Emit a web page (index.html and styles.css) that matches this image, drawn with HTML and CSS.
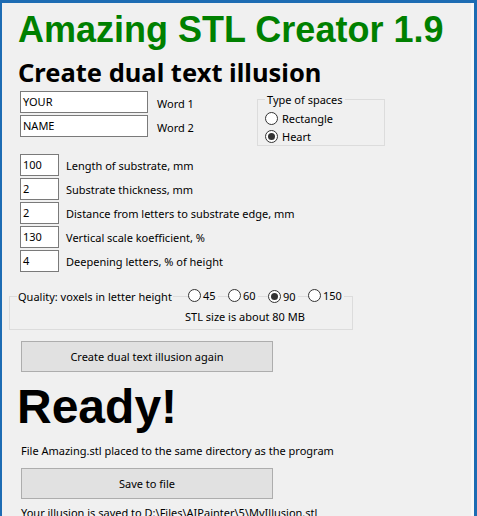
FILE: index.html
```html
<!DOCTYPE html>
<html>
<head>
<meta charset="utf-8">
<link rel="stylesheet" href="styles.css">
</head>
<body>
<div class="window">
  <h1 class="title">Amazing STL Creator 1.9</h1>
  <h2 class="subtitle">Create dual text illusion</h2>

  <div class="words-row">
    <div class="words">
      <div class="field-row"><div class="tb tb-word">YOUR</div><span class="word-label">Word 1</span></div>
      <div class="field-row"><div class="tb tb-word">NAME</div><span class="word-label">Word 2</span></div>
    </div>
    <div class="group spaces">
      <div class="group-head"><span class="legend">Type of spaces</span></div>
      <div class="radio-row first"><span class="radio"></span><span class="radio-text">Rectangle</span></div>
      <div class="radio-row"><span class="radio checked"></span><span class="radio-text">Heart</span></div>
    </div>
  </div>

  <div class="params">
    <div class="field-row"><div class="tb tb-num">100</div><span class="param-label">Length of substrate, mm</span></div>
    <div class="field-row"><div class="tb tb-num">2</div><span class="param-label">Substrate thickness, mm</span></div>
    <div class="field-row"><div class="tb tb-num">2</div><span class="param-label">Distance from letters to substrate edge, mm</span></div>
    <div class="field-row"><div class="tb tb-num">130</div><span class="param-label">Vertical scale koefficient, %</span></div>
    <div class="field-row"><div class="tb tb-num">4</div><span class="param-label">Deepening letters, % of height</span></div>
  </div>

  <div class="group quality">
    <div class="group-head">
      <div class="q-legend"><span class="legend">Quality: voxels in letter height</span></div>
      <div class="q-opt"><span class="q-inner"><span class="radio"></span><span class="q-text">45</span></span></div>
      <div class="q-opt"><span class="q-inner"><span class="radio"></span><span class="q-text">60</span></span></div>
      <div class="q-opt"><span class="q-inner"><span class="radio checked"></span><span class="q-text">90</span></span></div>
      <div class="q-opt"><span class="q-inner"><span class="radio"></span><span class="q-text">150</span></span></div>
    </div>
    <div class="stl-size">STL size is about 80 MB</div>
  </div>

  <div class="button btn-create">Create dual text illusion again</div>

  <div class="ready">Ready!</div>

  <div class="info">File Amazing.stl placed to the same directory as the program</div>

  <div class="button btn-save">Save to file</div>

  <div class="info saved">Your illusion is saved to D:\Files\AIPainter\5\MyIllusion.stl</div>
</div>
</body>
</html>
```

FILE: styles.css
```css
html, body {
  margin: 0;
  padding: 0;
}

body {
  width: 477px;
  height: 516px;
  overflow: hidden;
  background: #f0f0f0;
  font-family: "Noto Sans", "Open Sans", sans-serif;
  font-size: 11px;
  color: #000;
}

.window {
  box-sizing: border-box;
  height: 516px;
  border-top: 3px solid #1d6cb3;
  border-left: 2px solid #1d6cb3;
  border-right: 3px solid #1d6cb3;
  padding-left: 16px;
  padding-top: 9px;
  overflow: hidden;
  box-shadow: inset -3px 0 0 #f8f8f8;
}

.title {
  margin: 0;
  font: bold 36px/36px "Liberation Sans", Arial, sans-serif;
  color: #008000;
  white-space: nowrap;
}

.subtitle {
  margin: 10px 0 0;
  font: bold 25.5px/28px "Noto Sans", sans-serif;
  white-space: nowrap;
}

.words-row {
  display: flex;
  align-items: flex-start;
  margin-top: 5px;
}

.words {
  display: flex;
  flex-direction: column;
  gap: 2px;
  width: 237px;
  margin-left: 2px;
}

.field-row {
  display: flex;
  align-items: center;
  height: 22px;
}

.tb {
  box-sizing: border-box;
  height: 22px;
  background: #fff;
  border: 1px solid #7a7a7a;
  padding: 0 2px 1px;
  display: flex;
  align-items: center;
  flex-shrink: 0;
}

.tb-word {
  width: 128px;
}

.tb-num {
  width: 39px;
}

.word-label {
  margin-left: 9px;
  padding-top: 3px;
}

.param-label {
  margin-left: 7px;
  padding-top: 1px;
}

.group {
  box-sizing: border-box;
  border: 1px solid #dcdcdc;
}

.group-head {
  display: flex;
  align-items: center;
  height: 16px;
  margin-top: -9px;
  padding-left: 7px;
}

.legend {
  background: #f0f0f0;
  padding: 0 1px;
  white-space: nowrap;
}

.spaces {
  width: 128px;
  height: 47px;
  margin-top: 8px;
}

.spaces .legend {
  padding: 0 2px;
}

.radio-row {
  display: flex;
  align-items: center;
  height: 18px;
  padding-left: 7px;
}

.radio-row.first {
  margin-top: 2px;
}

.radio {
  box-sizing: border-box;
  width: 13px;
  height: 13px;
  border: 1px solid #333;
  border-radius: 50%;
  background: #fff;
  flex-shrink: 0;
  display: flex;
  align-items: center;
  justify-content: center;
}

.radio.checked::after {
  content: "";
  width: 7px;
  height: 7px;
  border-radius: 50%;
  background: #333;
}

.radio-text {
  margin-left: 4px;
}

.params {
  display: flex;
  flex-direction: column;
  gap: 2px;
  margin-top: 8px;
  margin-left: 2px;
}

.quality {
  width: 344px;
  height: 34px;
  margin-top: 24px;
  margin-left: -9px;
}

.q-legend {
  width: 171px;
  flex-shrink: 0;
}

.q-opt {
  width: 40px;
  flex-shrink: 0;
}

.q-inner {
  display: inline-flex;
  align-items: center;
  background: #f0f0f0;
  padding-right: 2px;
}

.q-text {
  margin-left: 2px;
}

.stl-size {
  height: 25px;
  line-height: 25px;
  padding-left: 175px;
}

.button {
  box-sizing: border-box;
  width: 252px;
  height: 31px;
  margin-left: 3px;
  background: #e1e1e1;
  border: 1px solid #adadad;
  display: flex;
  align-items: center;
  justify-content: center;
}

.btn-create {
  margin-top: 11px;
}

.ready {
  margin-top: 11px;
  margin-left: -1px;
  font: bold 48px/48px "Liberation Sans", Arial, sans-serif;
}

.info {
  margin-top: 12px;
  margin-left: 3px;
  line-height: 16px;
  white-space: nowrap;
}

.btn-save {
  margin-top: 9px;
}

.info.saved {
  margin-top: 6px;
}
```
